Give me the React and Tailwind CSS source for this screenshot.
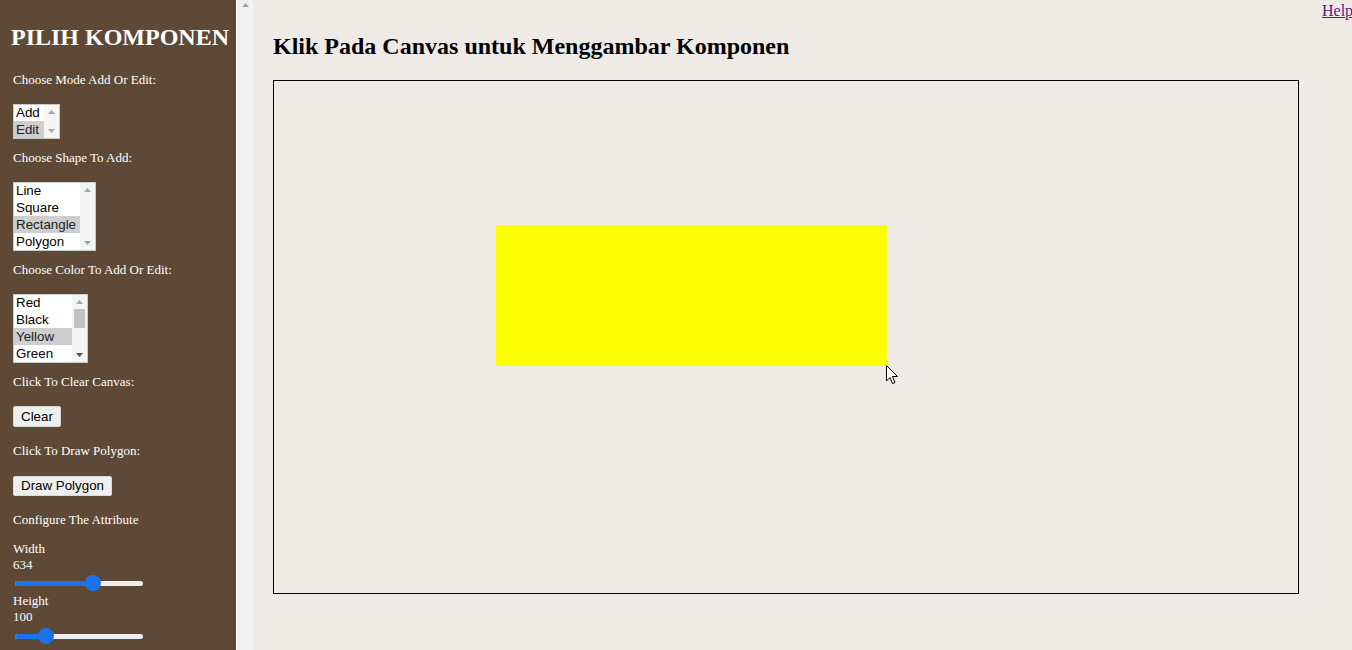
import React from "react";

const serif = { fontFamily: '"Liberation Serif", "Times New Roman", serif' };
const sans = { fontFamily: '"Liberation Sans", Arial, sans-serif' };

function Arrow({ up, dark }) {
  return (
    <svg width="7" height="4" viewBox="0 0 7 4">
      {up ? (
        <path d="M0 4 L3.5 0 L7 4 Z" fill={dark ? "#505050" : "#a3a3a3"} />
      ) : (
        <path d="M0 0 L3.5 4 L7 0 Z" fill={dark ? "#505050" : "#a3a3a3"} />
      )}
    </svg>
  );
}

function Listbox({ options, selected, width, height, thumb, downDark }) {
  return (
    <div
      className="flex bg-white border border-[#c9c9c9] overflow-hidden"
      style={{ width, height }}
    >
      <div className="flex-1 flex flex-col text-[13.33px] leading-[17px] text-black -mt-[1px]" style={sans}>
        {options.map((o) => (
          <div
            key={o}
            className={
              "pl-[2px] h-[17px] shrink-0 whitespace-nowrap " +
              (o === selected ? "bg-[#cecece] text-[#222]" : "")
            }
          >
            {o}
          </div>
        ))}
      </div>
      <div className="w-[15px] bg-[#f5f5f5] flex flex-col items-center">
        <div className="h-[14px] flex items-center justify-center">
          <Arrow up />
        </div>
        <div className="flex-1 w-full px-[2px]">
          {thumb && <div className="w-full h-[19px] bg-[#c1c1c1]" />}
        </div>
        <div className="h-[14px] flex items-center justify-center">
          <Arrow dark={downDark} />
        </div>
      </div>
    </div>
  );
}

function Label({ children, className = "" }) {
  return (
    <div className={"text-[13px] text-white pl-[13px] " + className} style={serif}>
      {children}
    </div>
  );
}

function Btn({ children, className = "" }) {
  return (
    <div
      className={
        "flex items-center justify-center px-[7px] bg-[#efefef] border border-[#d8d8d8] rounded-[2px] text-[13.33px] leading-none text-black " +
        className
      }
      style={sans}
    >
      {children}
    </div>
  );
}

function Slider({ pos }) {
  return (
    <div className="relative ml-[15px] w-[128px] h-[16px] flex items-center">
      <div className="w-full h-[5px] rounded-full bg-[#efefef] overflow-hidden">
        <div className="h-full bg-[#1a73e8]" style={{ width: pos }} />
      </div>
      <div
        className="absolute top-0 w-[16px] h-[16px] rounded-full bg-[#1a73e8]"
        style={{ left: pos - 8 }}
      />
    </div>
  );
}

export default function App() {
  return (
    <div className="flex w-[1352px] h-[650px] overflow-hidden bg-[#eeebe7]">
      <div className="w-[236px] shrink-0 bg-[#5e4936] flex flex-col">
        <div
          className="mt-[23px] pl-[11px] text-[24px] leading-[28px] font-bold text-white whitespace-nowrap"
          style={serif}
        >
          PILIH KOMPONEN
        </div>
        <Label className="mt-[21px] leading-[15px]">Choose Mode Add Or Edit:</Label>
        <div className="flex pl-[13px] mt-[17px]">
          <Listbox options={["Add", "Edit"]} selected="Edit" width={47} height={35} />
        </div>
        <Label className="mt-[11px] leading-[15px]">Choose Shape To Add:</Label>
        <div className="flex pl-[13px] mt-[17px]">
          <Listbox options={["Line", "Square", "Rectangle", "Polygon"]} selected="Rectangle" width={83} height={69} />
        </div>
        <Label className="mt-[11px] leading-[15px]">Choose Color To Add Or Edit:</Label>
        <div className="flex pl-[13px] mt-[17px]">
          <Listbox options={["Red", "Black", "Yellow", "Green"]} selected="Yellow" width={75} height={69} thumb downDark />
        </div>
        <Label className="mt-[11px] leading-[15px]">Click To Clear Canvas:</Label>
        <div className="flex pl-[13px] mt-[17px]">
          <Btn className="h-[21px]">Clear</Btn>
        </div>
        <Label className="mt-[16px] leading-[15px]">Click To Draw Polygon:</Label>
        <div className="flex pl-[13px] mt-[18px]">
          <Btn className="h-[20px]">Draw Polygon</Btn>
        </div>
        <Label className="mt-[16px] leading-[15px]">Configure The Attribute</Label>
        <Label className="mt-[14px] leading-[16px]">Width</Label>
        <Label className="leading-[16px]">634</Label>
        <div className="mt-[2px]">
          <Slider pos={78} />
        </div>
        <Label className="mt-[2px] leading-[16px]">Height</Label>
        <Label className="leading-[16px]">100</Label>
        <div className="mt-[3px]">
          <Slider pos={31} />
        </div>
      </div>
      <div className="w-[17px] shrink-0 bg-[#f1f1f1] border-l border-[#ffffff] flex flex-col items-center pt-[3px]">
        <Arrow up />
      </div>
      <div className="flex-1 flex pl-[20px]">
        <div className="flex flex-col w-[1026px] shrink-0">
          <div
            className="mt-[32px] text-[24px] leading-[28px] font-bold text-black whitespace-nowrap"
            style={serif}
          >
            Klik Pada Canvas untuk Menggambar Komponen
          </div>
          <div className="mt-[20px] relative w-[1026px] h-[514px] border border-black">
            <div className="absolute left-[222px] top-[144px] w-[391px] h-[141px] bg-[#ffff00]" />
            <svg
              className="absolute left-[612px] top-[284px]"
              width="13"
              height="20"
              viewBox="0 0 13 20"
            >
              <path
                d="M0.5 0.5 L0.5 16 L4 12.5 L6.5 18.5 L9 17.5 L6.5 11.5 L11.5 11.5 Z"
                fill="#fff"
                stroke="#000"
                strokeWidth="1"
                strokeLinejoin="round"
              />
            </svg>
          </div>
        </div>
        <a
          href="#"
          className="ml-[23px] mt-[1px] text-[16px] leading-[20px] text-[#551a8b] underline whitespace-nowrap"
          style={serif}
        >
          Help
        </a>
      </div>
    </div>
  );
}
